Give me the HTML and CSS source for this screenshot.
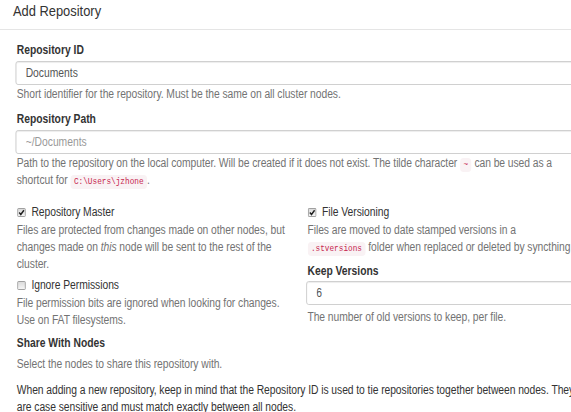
FILE: index.html
```html
<!DOCTYPE html>
<html lang="en">
<head>
<meta charset="utf-8">
<title>Add Repository</title>
<link rel="stylesheet" href="styles.css">
</head>
<body>
<div class="viewport">
  <div class="modal">
    <div class="modal-header">
      <h4 class="modal-title">Add Repository</h4>
    </div>
    <form class="modal-body">
      <div class="field">
        <label class="field-label" for="repo-id">Repository ID</label>
        <input id="repo-id" class="form-control" type="text" value="Documents">
        <p class="help">Short identifier for the repository. Must be the same on all cluster nodes.</p>
      </div>
      <div class="field">
        <label class="field-label" for="repo-path">Repository Path</label>
        <input id="repo-path" class="form-control" type="text" placeholder="~/Documents">
        <p class="help">Path to the repository on the local computer. Will be created if it does not exist. The tilde character <code>~</code> can be used as a shortcut for <code>C:\Users\jzhone</code>.</p>
      </div>
      <div class="options">
        <div class="col">
          <label class="check"><svg class="box" width="10" height="9" viewBox="0 0 10 10" preserveAspectRatio="none"><defs><linearGradient id="g1" x1="0" y1="0" x2="0" y2="1"><stop offset="0" stop-color="#d9d9d9"/><stop offset="1" stop-color="#f7f7f7"/></linearGradient></defs><rect x="0.5" y="0.5" width="9" height="9" rx="1" fill="url(#g1)" stroke="#8f8f8f"/><path d="M2.3 5.1 L4.2 7.2 L7.8 2.6" fill="none" stroke="#222" stroke-width="1.7"/></svg>Repository Master</label>
          <p class="help">Files are protected from changes made on other nodes, but changes made on <em>this</em> node will be sent to the rest of the cluster.</p>
          <label class="check"><svg class="box" width="10" height="9" viewBox="0 0 10 10" preserveAspectRatio="none"><defs><linearGradient id="g2" x1="0" y1="0" x2="0" y2="1"><stop offset="0" stop-color="#d9d9d9"/><stop offset="1" stop-color="#f7f7f7"/></linearGradient></defs><rect x="0.5" y="0.5" width="9" height="9" rx="1" fill="url(#g2)" stroke="#8f8f8f"/></svg>Ignore Permissions</label>
          <p class="help">File permission bits are ignored when looking for changes. Use on FAT filesystems.</p>
        </div>
        <div class="col">
          <label class="check"><svg class="box" width="10" height="9" viewBox="0 0 10 10" preserveAspectRatio="none"><defs><linearGradient id="g3" x1="0" y1="0" x2="0" y2="1"><stop offset="0" stop-color="#d9d9d9"/><stop offset="1" stop-color="#f7f7f7"/></linearGradient></defs><rect x="0.5" y="0.5" width="9" height="9" rx="1" fill="url(#g3)" stroke="#8f8f8f"/><path d="M2.3 5.1 L4.2 7.2 L7.8 2.6" fill="none" stroke="#222" stroke-width="1.7"/></svg>File Versioning</label>
          <p class="help">Files are moved to date stamped versions in a <code>.stversions</code> folder when replaced or deleted by syncthing.</p>
          <div class="field field-keep">
            <label class="field-label label-keep" for="keep">Keep Versions</label>
            <input id="keep" class="form-control" type="text" value="6">
            <p class="help help-keep">The number of old versions to keep, per file.</p>
          </div>
        </div>
      </div>
      <div class="field">
        <label class="field-label">Share With Nodes</label>
        <p class="help help-share">Select the nodes to share this repository with.</p>
      </div>
      <p class="note">When adding a new repository, keep in mind that the Repository ID is used to tie repositories together between nodes. They are case sensitive and must match exactly between all nodes.</p>
    </form>
  </div>
</div>
</body>
</html>
```

FILE: styles.css
```css
html, body {
  margin: 0;
  padding: 0;
  background: #fff;
  overflow: hidden;
}

body {
  font-family: "Liberation Sans", Arial, sans-serif;
  font-size: 12px;
  line-height: 1.41667;
  color: #333;
}

.viewport {
  width: 664px;
  transform: scaleX(0.86);
  transform-origin: 0 0;
}

.modal {
  width: 698px;
}

.modal-header {
  padding: 0 15px 8px;
  border-bottom: 1px solid #e5e5e5;
}

.modal-title {
  margin: 0;
  font-size: 15px;
  line-height: 21px;
  font-weight: normal;
  color: #333;
}

.modal-body {
  display: block;
  padding: 12px 18px 0 19.5px;
}

.field-label {
  display: block;
  font-weight: bold;
  margin-bottom: 2px;
}

.form-control {
  display: block;
  width: calc(100% + 1.7px);
  height: 24px;
  box-sizing: border-box;
  margin: 0 0 0 -1.7px;
  padding: 0 11px;
  border: 1px solid #ccc;
  border-radius: 3px;
  background: #fff;
  box-shadow: inset 0 1px 1px rgba(0, 0, 0, 0.075);
  font-family: inherit;
  font-size: 12px;
  color: #555;
}

.form-control::placeholder {
  color: #999;
}

.help {
  margin: 1px 0 8px;
  color: #737373;
  letter-spacing: -0.07px;
}

code {
  font-family: "Liberation Mono", "DejaVu Sans Mono", monospace;
  font-size: 9px;
  letter-spacing: 0;
  padding: 2px 4px;
  color: #c7254e;
  background: #f9f2f4;
  border-radius: 4px;
}

.options {
  display: grid;
  grid-template-columns: 314px 310px;
  column-gap: 24px;
  margin-top: 15px;
  margin-bottom: 2px;
}

.check {
  display: block;
  font-weight: normal;
  color: #333;
  letter-spacing: -0.05px;
}

.check + .help {
  margin-top: 1px;
  margin-bottom: 4px;
}

.box {
  display: inline-block;
  vertical-align: -1px;
  margin-right: 7px;
}

.field-keep {
  margin-top: 7px;
}

.label-keep {
  margin-bottom: 1px;
}

.help-keep {
  margin-top: 4px;
  margin-bottom: 5px;
}

.help-share {
  margin-top: 4px;
  margin-bottom: 0;
}

.note {
  margin: 9px 0 0;
  color: #333;
  letter-spacing: -0.07px;
}
```
